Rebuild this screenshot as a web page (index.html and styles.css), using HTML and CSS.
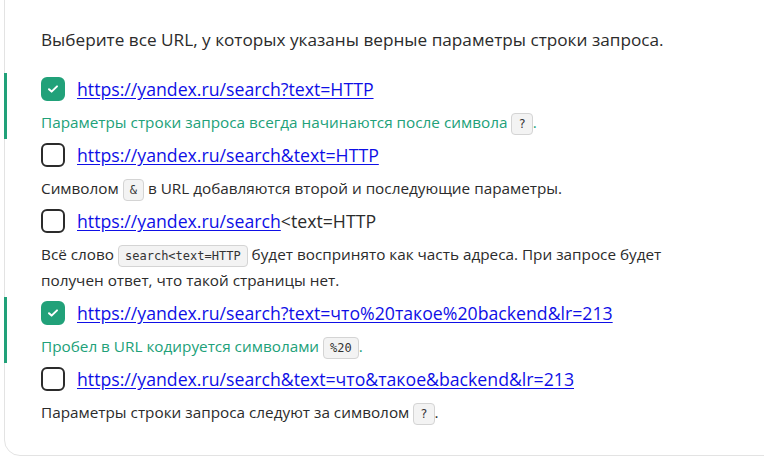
FILE: index.html
```html
<!DOCTYPE html>
<html lang="ru">
<head>
<meta charset="utf-8">
<link rel="stylesheet" href="styles.css">
</head>
<body>
<div class="card">
  <p class="title">Выберите все URL, у которых указаны верные параметры строки запроса.</p>
  <div class="opt sel">
    <div class="row"><span class="box on"><svg width="12" height="10" viewBox="0 0 12 10"><path d="M2 5.2l2.6 2.4L10 2.4" fill="none" stroke="#fff" stroke-width="2" stroke-linecap="round" stroke-linejoin="round"/></svg></span><a class="link" href="#">https://yandex.ru/search?text=HTTP</a></div>
    <div class="hint ok">Параметры строки запроса всегда начинаются после символа <code>?</code>.</div>
  </div>
  <div class="opt">
    <div class="row"><span class="box"></span><a class="link" href="#">https://yandex.ru/search&amp;text=HTTP</a></div>
    <div class="hint">Символом <code>&amp;</code> в URL добавляются второй и последующие параметры.</div>
  </div>
  <div class="opt">
    <div class="row"><span class="box"></span><span><a class="link" href="#">https://yandex.ru/search</a>&lt;text=HTTP</span></div>
    <div class="hint">Всё слово <code>search&lt;text=HTTP</code> будет воспринято как часть адреса. При запросе будет получен ответ, что такой страницы нет.</div>
  </div>
  <div class="opt sel">
    <div class="row"><span class="box on"><svg width="12" height="10" viewBox="0 0 12 10"><path d="M2 5.2l2.6 2.4L10 2.4" fill="none" stroke="#fff" stroke-width="2" stroke-linecap="round" stroke-linejoin="round"/></svg></span><a class="link" href="#">https://yandex.ru/search?text=что%20такое%20backend&amp;lr=213</a></div>
    <div class="hint ok">Пробел в URL кодируется символами <code>%20</code>.</div>
  </div>
  <div class="opt">
    <div class="row"><span class="box"></span><a class="link" href="#">https://yandex.ru/search&amp;text=что&amp;такое&amp;backend&amp;lr=213</a></div>
    <div class="hint">Параметры строки запроса следуют за символом <code>?</code>.</div>
  </div>
</div>
</body>
</html>
```
FILE: styles.css
```css
html, body { margin: 0; padding: 0; background: #fff; }
body {
  font-family: "Open Sans", "Noto Sans", sans-serif;
  color: #2b2b2b;
  overflow: hidden;
}
.card {
  margin: -30px 0 0 4px;
  width: 800px;
  height: 486px;
  border: 1px solid #e3e3e3;
  border-radius: 16px;
  box-sizing: border-box;
  padding-top: 56px;
}
.title {
  margin: 0 0 20px 36px;
  font-size: 17.2px;
  line-height: 26px;
}
.opt {
  margin-left: -1px;
  border-left: 3px solid transparent;
  padding: 4px 0 4px 34px;
  width: 640px;
}
.opt.sel { border-left-color: #21a179; }
.row {
  display: flex;
  align-items: center;
  gap: 12px;
  font-size: 17.7px;
  line-height: 24px;
}
.box {
  width: 24px;
  height: 24px;
  box-sizing: border-box;
  border: 2px solid #2b2b2b;
  border-radius: 6px;
  display: flex;
  align-items: center;
  justify-content: center;
  flex: none;
}
.box.on { background: #21a179; border-color: #21a179; }
.link { color: #0f0fe6; text-decoration: underline; text-underline-offset: 2px; }
.hint {
  margin-top: 8px;
  font-size: 15.3px;
  line-height: 26px;
}
.hint.ok { color: #21a179; }
code {
  display: inline-block;
  font-family: "DejaVu Sans Mono", monospace;
  font-size: 12px;
  line-height: 20px;
  padding: 0 6px;
  color: #333;
  background: #f3f3f3;
  border: 1px solid #d4d4d4;
  border-radius: 4px;
  vertical-align: middle;
}
```
